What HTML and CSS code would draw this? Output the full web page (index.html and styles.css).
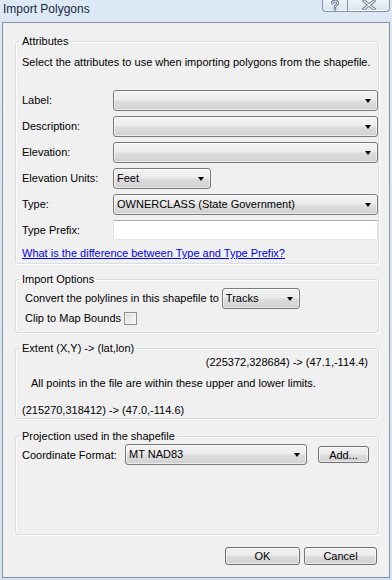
FILE: index.html
```html
<!DOCTYPE html>
<html lang="en">
<head>
  <meta charset="UTF-8">
  <title>Import Polygons</title>
  <link rel="stylesheet" href="styles.css">
</head>
<body>
  <div class="window">
    <div class="titlebar">
      <span class="title">Import Polygons</span>
      <div class="caption-btns">
        <span class="cap help">
          <svg width="12" height="11" viewBox="0 0 12 11">
            <path d="M3.2 3.2 C3.2 0.4 8.8 0.4 8.8 3 C8.8 5 6 4.8 6 6.8" fill="none" stroke="#6b7b90" stroke-width="2.8" stroke-linecap="round"/>
            <circle cx="6" cy="9.4" r="1.4" fill="#6b7b90"/>
            <path d="M3.2 3.2 C3.2 0.4 8.8 0.4 8.8 3 C8.8 5 6 4.8 6 6.8" fill="none" stroke="#fff" stroke-width="1" stroke-linecap="round"/>
            <circle cx="6" cy="9.4" r="0.5" fill="#fff"/>
          </svg>
        </span>
        <span class="cap close">
          <svg width="16" height="10" viewBox="0 0 16 10">
            <path d="M3 1 L13 9 M13 1 L3 9" stroke="#6b7b90" stroke-width="3" stroke-linecap="square"/>
            <path d="M3 1 L13 9 M13 1 L3 9" stroke="#fff" stroke-width="1.1" stroke-linecap="square"/>
          </svg>
        </span>
      </div>
    </div>

    <div class="client">
      <fieldset class="group attributes">
        <legend>Attributes</legend>
        <p class="intro">Select the attributes to use when importing polygons from the shapefile.</p>
        <div class="form">
          <label>Label:</label>
          <div class="combo"></div>
          <label>Description:</label>
          <div class="combo"></div>
          <label>Elevation:</label>
          <div class="combo"></div>
          <label>Elevation Units:</label>
          <div class="combo units">Feet</div>
          <label>Type:</label>
          <div class="combo">OWNERCLASS (State Government)</div>
          <label>Type Prefix:</label>
          <div class="textbox"></div>
        </div>
        <a class="help-link" href="#">What is the difference between Type and Type Prefix?</a>
      </fieldset>

      <fieldset class="group options">
        <legend>Import Options</legend>
        <div class="opt-row">
          <span>Convert the polylines in this shapefile to</span>
          <div class="combo tracks">Tracks</div>
        </div>
        <div class="opt-row clip">
          <span>Clip to Map Bounds</span>
          <span class="checkbox"></span>
        </div>
      </fieldset>

      <fieldset class="group extent">
        <legend>Extent (X,Y) -&gt; (lat,lon)</legend>
        <p class="upper">(225372,328684) -&gt; (47.1,-114.4)</p>
        <p class="note">All points in the file are within these upper and lower limits.</p>
        <p class="lower">(215270,318412) -&gt; (47.0,-114.6)</p>
      </fieldset>

      <fieldset class="group projection">
        <legend>Projection used in the shapefile</legend>
        <div class="proj-row">
          <label>Coordinate Format:</label>
          <div class="combo coord">MT NAD83</div>
          <button class="btn add">Add...</button>
        </div>
      </fieldset>

      <div class="actions">
        <button class="btn ok">OK</button>
        <button class="btn cancel">Cancel</button>
      </div>
    </div>
  </div>
</body>
</html>
```

FILE: styles.css
```css
* {
  box-sizing: border-box;
}

body {
  margin: 0;
  font-family: "Liberation Sans", Arial, sans-serif;
  font-size: 11px;
  color: #000;
  background: #d9e5f3;
}

.window {
  width: 392px;
  height: 580px;
  display: flex;
  flex-direction: column;
  background: linear-gradient(#dce8f5, #d5e2f1);
}

.titlebar {
  height: 22px;
  display: flex;
  justify-content: space-between;
  align-items: flex-start;
  padding-left: 3px;
}

.title {
  font-size: 12px;
  line-height: 18px;
  color: #1b2a3d;
}

.caption-btns {
  display: flex;
  margin-right: 2px;
}

.cap {
  height: 12px;
  display: flex;
  justify-content: center;
  align-items: flex-start;
  border: 1px solid #8595a8;
  border-top: 0;
  background: linear-gradient(#eef3f9, #dbe4ef);
  box-shadow: inset 0 -1px 0 #f7faff;
}

.help {
  width: 26px;
  border-radius: 0 0 0 4px;
}

.close {
  width: 42px;
  border-left: 0;
  border-radius: 0 0 4px 0;
}

.client {
  flex: 1;
  margin: 0 2px 2px 2px;
  border: 1px solid #85929f;
  background: #f0f0f0;
  padding: 11px 10px 0 12px;
}

/* group boxes */
.group {
  margin: 0;
  min-width: 0;
  padding: 0 0 0 6px;
  border: 1px solid #d5dfe5;
  border-radius: 3px;
  box-shadow: inset 1px 1px 0 #fff, 1px 1px 0 #fff;
}

.group legend {
  padding: 0 2px;
  margin-left: -2px;
  line-height: 15px;
}

.group p {
  margin: 0;
  line-height: 15px;
  white-space: nowrap;
}

.attributes {
  padding-bottom: 2px;
}

.intro {
  margin-top: 6px !important;
}

.form {
  display: grid;
  grid-template-columns: 91px 1fr;
  grid-auto-rows: 21px;
  row-gap: 5px;
  align-items: center;
  margin-top: 20px;
}

.form label {
  line-height: 15px;
}

.combo {
  position: relative;
  height: 21px;
  border: 1px solid #7a7a7a;
  border-radius: 3px;
  padding-left: 3px;
  line-height: 19px;
  white-space: nowrap;
  background: linear-gradient(#f3f3f3 0%, #ebebeb 48%, #dddddd 52%, #d1d1d1 100%);
  box-shadow: inset 0 0 0 1px rgba(255, 255, 255, 0.55);
}

.combo::after {
  content: "";
  position: absolute;
  right: 6px;
  top: 8px;
  border-left: 3.5px solid transparent;
  border-right: 3.5px solid transparent;
  border-top: 4px solid #000;
}

.combo.units {
  width: 98px;
}

.textbox {
  height: 20px;
  align-self: start;
  background: #fff;
  border: 1px solid;
  border-color: #abadb3 #dbdfe6 #e3e9ef #e2e3ea;
}

.help-link {
  display: block;
  margin-top: 5px;
  line-height: 15px;
  color: #0000ee;
  text-decoration: underline;
}

.options {
  margin-top: 8px;
  padding-bottom: 6px;
}

.opt-row {
  display: flex;
  align-items: center;
  margin-left: 3px;
  line-height: 15px;
}

.opt-row:first-of-type {
  margin-top: 1px;
}

.combo.tracks {
  width: 78px;
  margin-left: 3px;
}

.opt-row.clip {
  margin-top: 2px;
}

.checkbox {
  width: 13px;
  height: 13px;
  margin-left: 3px;
  border: 1px solid #8e8f8f;
  background: linear-gradient(135deg, #dcdcdc, #fbfbfb);
  box-shadow: inset 0 0 0 1px #f4f4f4;
}

.extent {
  margin-top: 8px;
}

.extent .upper {
  margin-top: -1px;
  text-align: right;
  padding-right: 10px;
}

.extent .note {
  margin-top: 6px;
  padding-left: 9px;
}

.extent .lower {
  margin-top: 12px;
}

.projection {
  margin-top: 10px;
  padding-bottom: 69px;
}

.proj-row {
  display: flex;
  align-items: center;
  height: 21px;
}

.proj-row label {
  width: 103px;
}

.combo.coord {
  width: 182px;
}

.btn {
  font-family: inherit;
  font-size: inherit;
  color: #000;
  padding: 0;
  border: 1px solid #707070;
  border-radius: 3px;
  background: linear-gradient(#f2f2f2 0%, #ebebeb 48%, #dddddd 52%, #cfcfcf 100%);
  box-shadow: inset 0 0 0 1px rgba(255, 255, 255, 0.6);
}

.btn.add {
  width: 51px;
  height: 17px;
  margin-left: 11px;
}

.actions {
  display: flex;
  justify-content: flex-end;
  gap: 4px;
  margin-top: 12px;
  padding-right: 2px;
}

.btn.ok {
  width: 75px;
  height: 18px;
}

.btn.cancel {
  width: 73px;
  height: 18px;
}
```
